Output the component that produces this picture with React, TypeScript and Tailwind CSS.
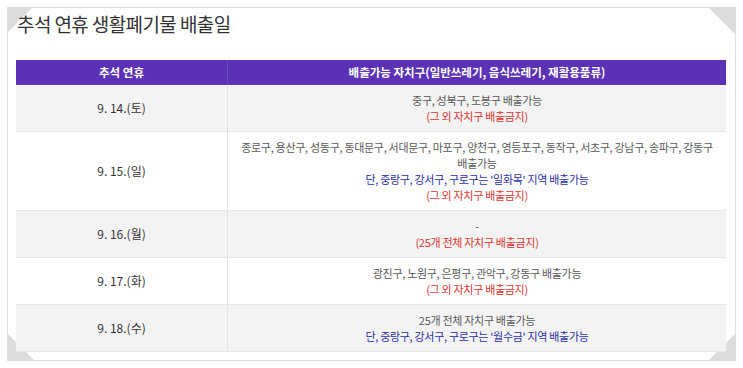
import React from 'react';

type Line = { text: string; tone?: 'base' | 'red' | 'blue' };

interface Row {
  date: string;
  lines: Line[];
  shaded: boolean;
}

const rows: Row[] = [
  {
    date: '9. 14.(토)',
    shaded: true,
    lines: [{ text: '중구, 성북구, 도봉구 배출가능' }, { text: '(그 외 자치구 배출금지)', tone: 'red' }],
  },
  {
    date: '9. 15.(일)',
    shaded: false,
    lines: [
      { text: '종로구, 용산구, 성동구, 동대문구, 서대문구, 마포구, 양천구, 영등포구, 동작구, 서초구, 강남구, 송파구, 강동구' },
      { text: '배출가능' },
      { text: "단, 중랑구, 강서구, 구로구는 '일화목' 지역 배출가능", tone: 'blue' },
      { text: '(그 외 자치구 배출금지)', tone: 'red' },
    ],
  },
  {
    date: '9. 16.(월)',
    shaded: true,
    lines: [{ text: '-' }, { text: '(25개 전체 자치구 배출금지)', tone: 'red' }],
  },
  {
    date: '9. 17.(화)',
    shaded: false,
    lines: [{ text: '광진구, 노원구, 은평구, 관악구, 강동구 배출가능' }, { text: '(그 외 자치구 배출금지)', tone: 'red' }],
  },
  {
    date: '9. 18.(수)',
    shaded: true,
    lines: [{ text: '25개 전체 자치구 배출가능' }, { text: "단, 중랑구, 강서구, 구로구는 '월수금' 지역 배출가능", tone: 'blue' }],
  },
];

const toneClass = {
  base: 'text-[#5a5a5a]',
  red: 'text-[#dc3430]',
  blue: 'text-[#2d2fa8]',
};

// corner folds of the frame
const Corner = ({ pos, points }: { pos: string; points: string }) => (
  <svg className={`absolute ${pos}`} width="28" height="28" viewBox="0 0 28 28">
    <polygon points={points} fill="#dcdcdc" />
  </svg>
);

export default function App() {
  return (
    <div className="w-[743px] h-[368px] bg-white pt-[7px] pl-[7px] font-['Noto_Sans_CJK_KR','Noto_Sans',sans-serif]">
      <div className="relative w-[729px] h-[354px] border border-[#dedede] bg-white pl-[8px] pr-[8px]">
        <Corner pos="-top-px -left-px" points="0,0 26,0 0,26" />
        <Corner pos="-top-px -right-px" points="0,0 28,0 28,28" />
        <Corner pos="-bottom-px -left-px" points="0,0 0,28 28,28" />
        <Corner pos="-bottom-px -right-px" points="28,0 28,28 0,28" />

        <h1 className="relative pt-[2px] pl-[1px] text-[19px] leading-[28px] tracking-[-0.6px] text-[#333333] mb-[22px]">
          추석 연휴 생활폐기물 배출일
        </h1>

        <div className="relative w-[710px]">
          <div className="grid grid-cols-[212px_1fr] h-[25px] bg-[#5b32b6] text-white text-[11.5px] font-bold">
            <div className="flex items-center justify-center border-r border-[#6d4cc0]">추석 연휴</div>
            <div className="flex items-center justify-center">배출가능 자치구(일반쓰레기, 음식쓰레기, 재활용품류)</div>
          </div>

          {rows.map((row) => (
            <div
              key={row.date}
              className={`grid grid-cols-[212px_1fr] border-b border-[#e6e6e6] ${row.shaded ? 'bg-[#f3f3f3]' : 'bg-white'}`}
            >
              <div className="flex items-center justify-center border-r border-[#e2e2e2] text-[12px] text-[#333333]">
                {row.date}
              </div>
              <div className="flex flex-col items-center justify-center py-[7px] text-[11px] leading-[16px] tracking-[-0.3px]">
                {row.lines.map((line, i) => (
                  <div key={i} className={`whitespace-nowrap ${toneClass[line.tone ?? 'base']}`}>
                    {line.text}
                  </div>
                ))}
              </div>
            </div>
          ))}
        </div>
      </div>
    </div>
  );
}
